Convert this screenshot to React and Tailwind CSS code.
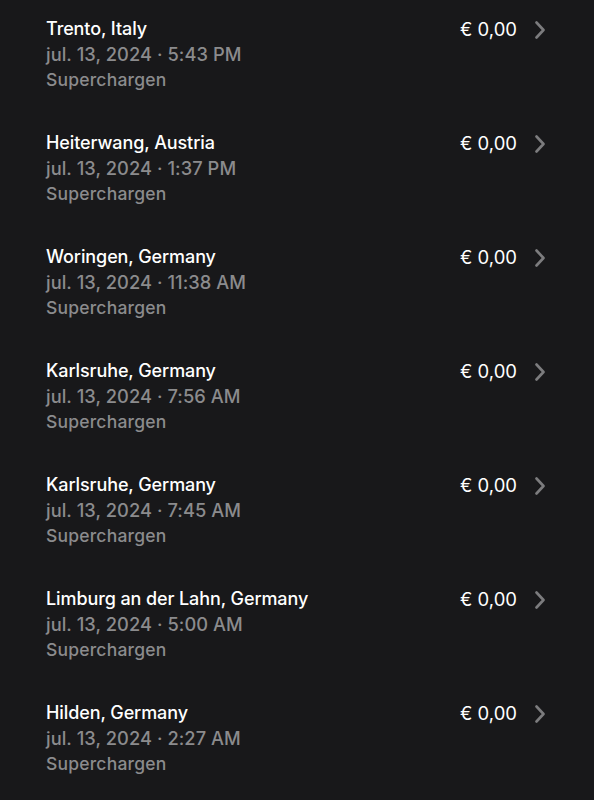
const sessions = [
  { place: "Trento, Italy", time: "5:43 PM" },
  { place: "Heiterwang, Austria", time: "1:37 PM" },
  { place: "Woringen, Germany", time: "11:38 AM" },
  { place: "Karlsruhe, Germany", time: "7:56 AM" },
  { place: "Karlsruhe, Germany", time: "7:45 AM" },
  { place: "Limburg an der Lahn, Germany", time: "5:00 AM" },
  { place: "Hilden, Germany", time: "2:27 AM" },
];

function Chevron() {
  return (
    <svg width="12" height="18" viewBox="0 0 12 18" fill="none" className="mt-[5px]">
      <path d="M2.5 1.5L9.5 9L2.5 16.5" stroke="#7c7c7e" strokeWidth="2.6" strokeLinecap="round" strokeLinejoin="round" />
    </svg>
  );
}

export default function App() {
  return (
    <div
      className="min-h-screen w-full bg-[#18181a] text-white"
      style={{ fontFamily: "Inter, 'Noto Sans', sans-serif" }}
    >
      {sessions.map((s, i) => (
        <div key={i} className="flex h-[114px] pl-[46px] pr-[48px] pt-[16px]">
          <div className="flex-1">
            <div className="text-[18px] leading-[26px] font-medium tracking-[-0.1px]">{s.place}</div>
            <div className="text-[18.3px] leading-[25px] text-[#8b8b8d] font-medium tracking-[0.05px]">
              jul. 13, 2024 · {s.time}
            </div>
            <div className="text-[17.5px] leading-[25px] text-[#8b8b8d] font-medium tracking-[0.2px]">
              Superchargen
            </div>
          </div>
          <div className="flex items-start gap-[17px]">
            <span className="text-[18.5px] leading-[26px]">€ 0,00</span>
            <Chevron />
          </div>
        </div>
      ))}
    </div>
  );
}
